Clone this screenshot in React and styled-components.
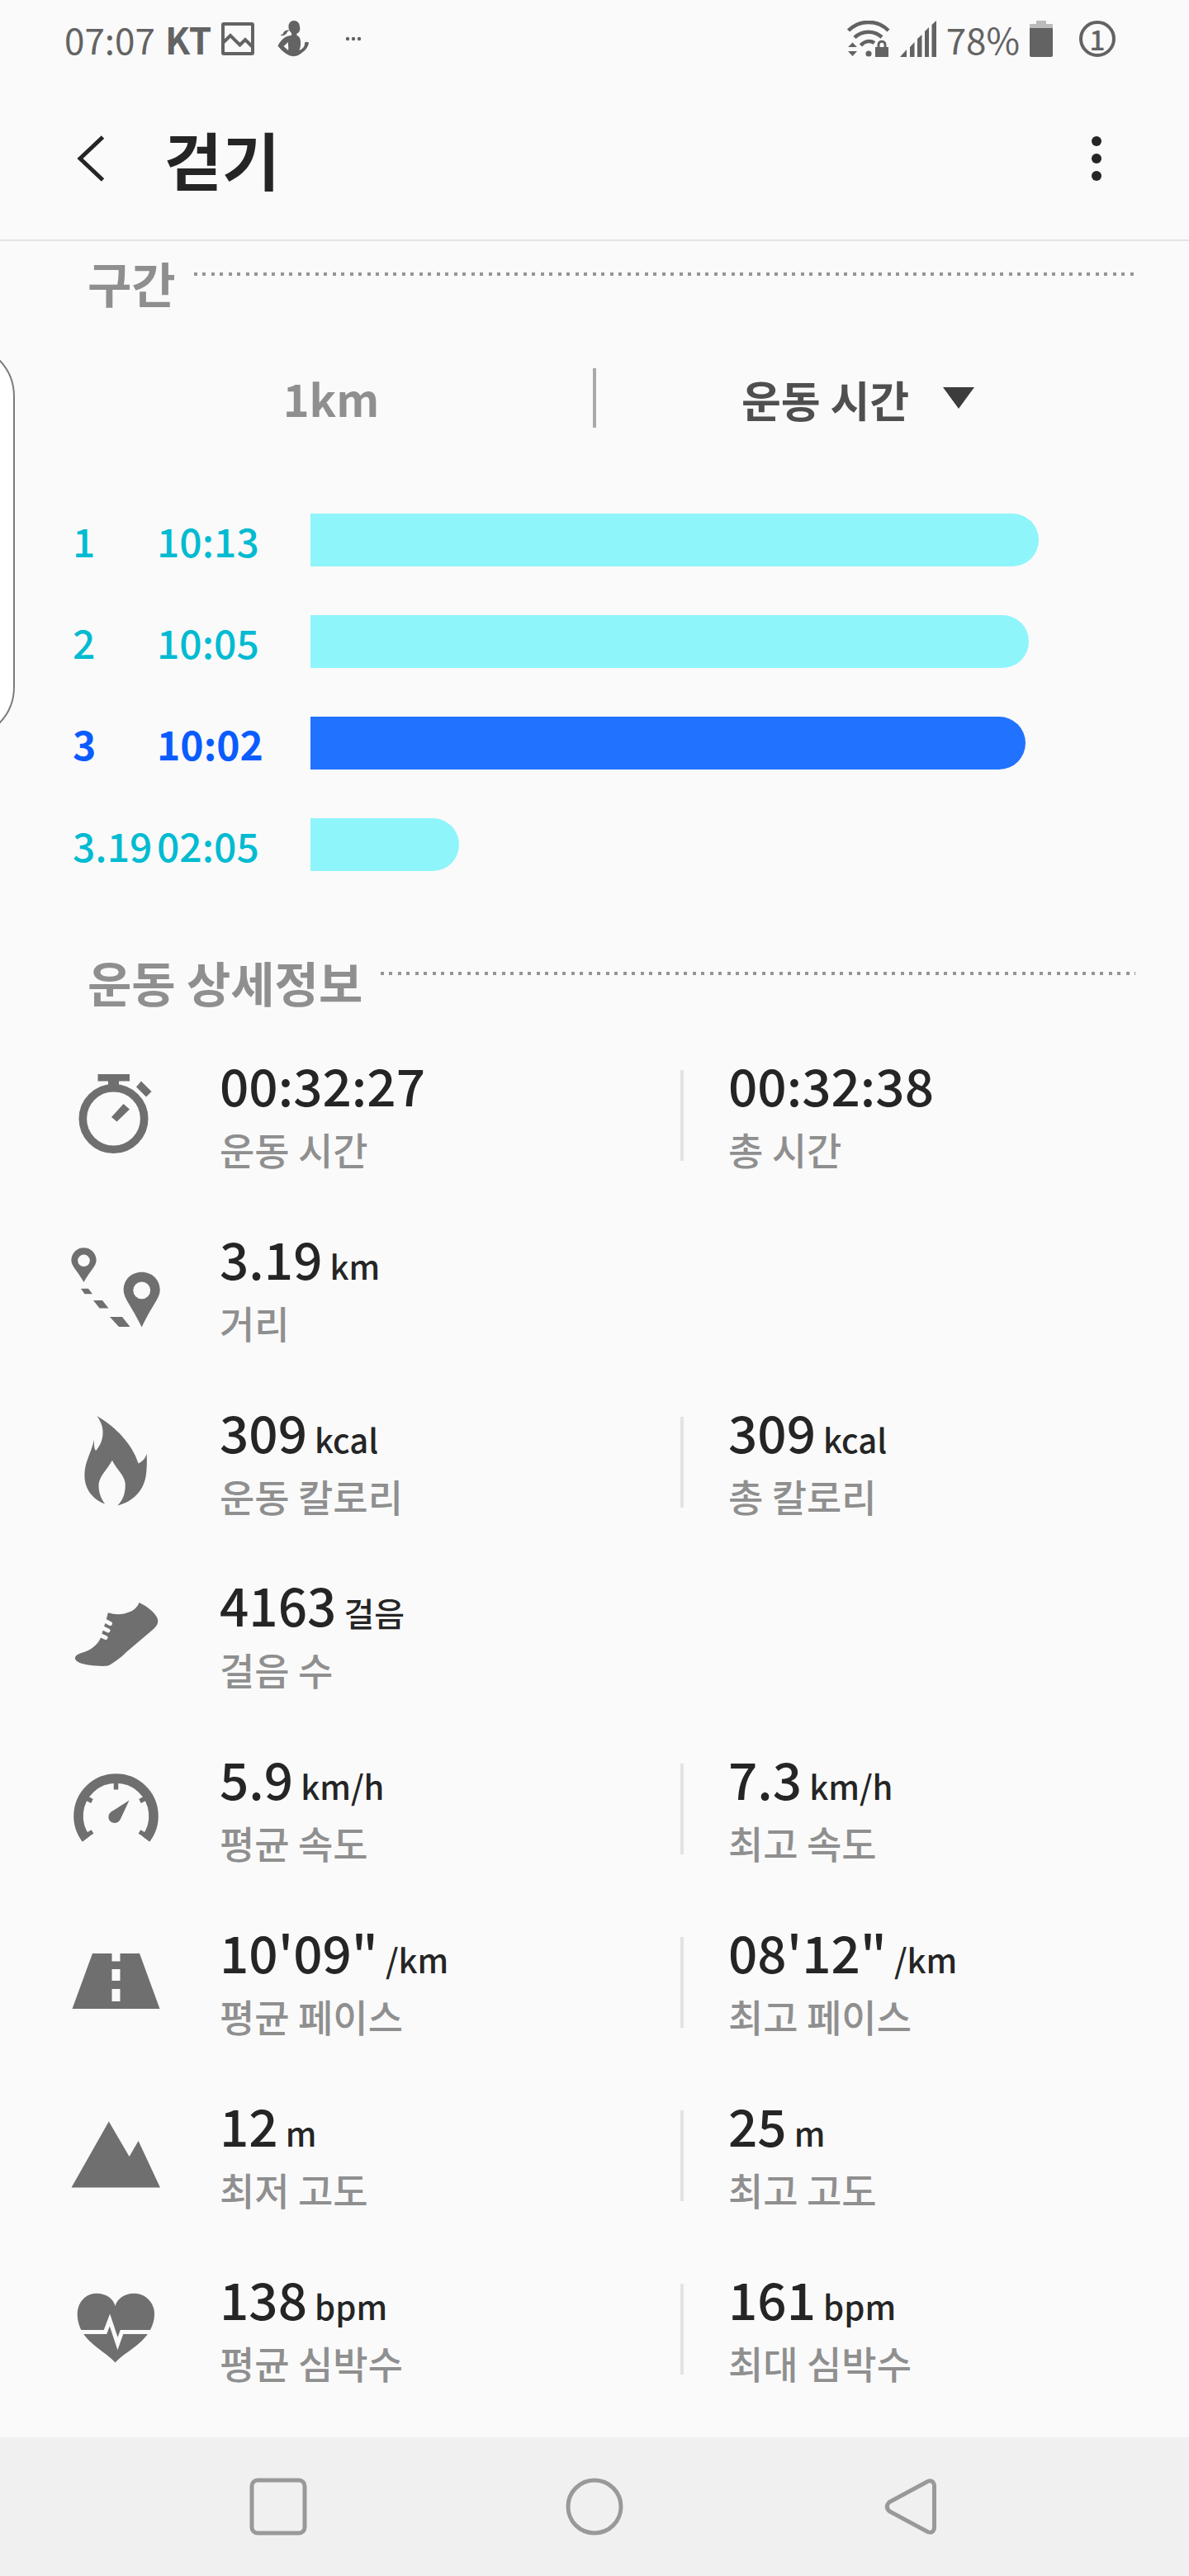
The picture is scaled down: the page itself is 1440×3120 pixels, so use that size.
import React from "react";
import styled, { createGlobalStyle } from "styled-components";

const GlobalStyle = createGlobalStyle`
  * {
    box-sizing: border-box;
  }

  body {
    margin: 0;
    background: #fafafa;
    color: #252525;
    font-family: "Noto Sans CJK KR", "Noto Sans", sans-serif;
  }

  button, select {
    margin: 0;
    padding: 0;
    border: 0;
    background: none;
    color: inherit;
    font: inherit;
    cursor: pointer;
  }

  svg {
    display: block;
    flex: none;
  }
`;

const Page = styled.div`
  position: relative;
  display: flex;
  flex-direction: column;
  min-height: 100vh;
  overflow: hidden;
`;

/* Status bar */

const StatusBar = styled.div`
  display: flex;
  justify-content: space-between;
  align-items: center;
  height: 94px;
  padding: 0 89px 0 78px;
  color: #636363;
  font-size: 44px;
  line-height: 44px;
`;

const StatusGroup = styled.div`
  display: flex;
  align-items: center;
  gap: ${(props) => props.$gap}px;
`;

const Carrier = styled.span`
  font-weight: 700;
`;

const CountBadge = styled.span`
  display: flex;
  align-items: center;
  justify-content: center;
  width: 44px;
  height: 44px;
  margin-left: 20px;
  border: 4px solid #636363;
  border-radius: 50%;
  font-size: 34px;
  font-weight: 500;
  line-height: 34px;
`;

/* App bar */

const AppBar = styled.header`
  display: flex;
  align-items: center;
  gap: 72px;
  height: 198px;
  padding: 0 106px 0 93px;
  border-bottom: 2px solid #e3e3e3;
`;

const Title = styled.h1`
  flex: 1;
  margin: 0;
  font-size: 76px;
  font-weight: 700;
  line-height: 96px;
`;

/* Handle of the edge panel, hangs over the left side */
const EdgeHandle = styled.div`
  position: absolute;
  top: 416px;
  left: -128px;
  width: 146px;
  height: 480px;
  border: 2px solid #7c7c7c;
  border-radius: 64px;
  background: #fff;
`;

/* Sections */

const Content = styled.main`
  padding: 18px 0 60px;
`;

const SectionHeader = styled.div`
  display: flex;
  align-items: flex-start;
  gap: 22px;
  padding: 0 65px 0 106px;
`;

const SectionTitle = styled.h2`
  margin: 0;
  color: #8f8f8f;
  font-size: 58px;
  font-weight: 700;
  line-height: 64px;
`;

const DottedLine = styled.div`
  flex: 1;
  height: 4px;
  margin-top: 20px;
  background: repeating-linear-gradient(
    to right,
    #959595 0 4px,
    transparent 4px 10px,
    #959595 10px 14px,
    transparent 14px 21px
  );
`;

const Filters = styled.div`
  display: grid;
  grid-template-columns: 1fr 4px 1fr;
  align-items: center;
  height: 72px;
  margin-top: 72px;
  padding: 0 84px;
`;

const Unit = styled.span`
  color: #8f8f8f;
  font-size: 54px;
  font-weight: 700;
  line-height: 72px;
  text-align: center;
`;

const FilterDivider = styled.div`
  height: 72px;
  background: #a9a9a9;
`;

const SelectBox = styled.label`
  display: flex;
  align-items: center;
  justify-content: center;
  gap: 40px;
`;

const Select = styled.select`
  appearance: none;
  height: 72px;
  color: #4f4f4f;
  font-size: 52px;
  font-weight: 700;
`;

/* Splits chart */

const SplitList = styled.ol`
  display: flex;
  flex-direction: column;
  gap: 59px;
  margin: 104px 0 102px;
  padding: 0 182px 0 88px;
  list-style: none;
`;

const Split = styled.li`
  display: grid;
  grid-template-columns: 102px 186px 1fr;
  align-items: center;
  height: 64px;
  color: ${(props) => (props.$best ? "#0a5cff" : "#00bbd1")};
  font-size: 48px;
  font-weight: ${(props) => (props.$best ? 700 : 500)};
  line-height: 64px;
`;

const Bar = styled.div`
  height: 64px;
  border-radius: 0 32px 32px 0;
  background: ${(props) => (props.$best ? "#2172ff" : "#8ef5fb")};
`;

/* Details */

const DetailList = styled.div`
  display: flex;
  flex-direction: column;
  gap: 70px;
  margin-top: 60px;
  padding: 0 58px 0 84px;
`;

const DetailRow = styled.div`
  display: grid;
  grid-template-columns: 182px 1fr 1fr;
  align-items: center;
`;

const DetailCell = styled.div`
  display: flex;
  align-items: center;
  gap: 54px;
`;

const CellDivider = styled.div`
  width: 4px;
  height: 110px;
  background: #e3e3e3;
`;

const Value = styled.div`
  height: 64px;
  font-size: 62px;
  font-weight: 500;
  line-height: 64px;
  white-space: pre;
`;

const ValueUnit = styled.span`
  font-size: 40px;
  line-height: 40px;
`;

const Label = styled.div`
  margin-top: 16px;
  color: #8f8f8f;
  font-size: 46px;
  font-weight: 500;
  line-height: 60px;
`;

/* Navigation bar */

const NavBar = styled.nav`
  display: grid;
  grid-template-columns: repeat(3, 1fr);
  height: 168px;
  margin-top: auto;
  padding: 0 145px;
  background: #f0f0f0;
`;

const NavButton = styled.button`
  display: flex;
  align-items: center;
  justify-content: center;
`;

const BG = "#fafafa";

const PictureIcon = () => (
  <svg width="40" height="40" viewBox="0 0 40 40" fill="none" stroke="currentColor" strokeWidth="4">
    <rect x="2" y="2" width="36" height="36" rx="1" />
    <path d="M3 24 11 16 22.500 27.500 29 21 38 30" />
  </svg>
);

const PersonIcon = () => (
  <svg width="40" height="44" viewBox="0 0 40 44" fill="currentColor">
    <path d="M20 0C25 0 27 4 27 7.500 28 10 27 15 23.500 15.500V18C27 19 28.500 23 28 29 28 32 27 34 26.500 36 31 34 33 31 33 28 32.500 26 35 25 38 26.500 37.500 33 32 38 25 42 22 43.500 17 43.500 14 42 8 39 3 34 .5 30.500 4 24 9 18 17 18V15C14.500 13 13 9 13.500 6 14 2 17 0 20 0Z" />
    <path d="M13 26 7.500 31 13 36C14 33 12.500 29 13 26Z" fill={BG} />
    <path d="M15 11.500C10 11 7 13 7 16L3.500 17.500C7 19.500 11 17 12 13.500Z" />
  </svg>
);

const MoreDots = () => (
  <svg width="20" height="6" viewBox="0 0 20 6" fill="currentColor">
    <circle cx="3" cy="3" r="2.200" />
    <circle cx="10" cy="3" r="2.200" />
    <circle cx="17" cy="3" r="2.200" />
  </svg>
);

const WifiIcon = () => (
  <svg width="52" height="44" viewBox="0 0 52 44" fill="none" stroke="currentColor" strokeWidth="4.500">
    <path d="M1.500 12C15-1.500 37-1.500 50 12" />
    <path d="M9 20.500C18 11.500 33 11.500 42 20" />
    <path d="M16.500 30C21 24.500 28 23.500 33 27" />
    <circle cx="26" cy="40" r="3.600" fill="currentColor" stroke="none" />
    <path d="M1 32 6.500 26.500 12 32ZM1 37 6.500 43 12 37ZM34 32H50V44H34Z" fill="currentColor" stroke="none" />
    <path d="M38 33V29C38 24 46 24 46 29V33" strokeWidth="3" />
  </svg>
);

const SignalIcon = () => (
  <svg width="44" height="44" viewBox="0 0 44 44" fill="currentColor">
    <path d="M0 44 8 35V44ZM12 44V32L17.500 26V44ZM21 44V22L26.500 17V44ZM30 44V13L35 8V44ZM38.500 44V5L44 0V44Z" />
  </svg>
);

const BatteryIcon = () => (
  <svg width="28" height="44" viewBox="0 0 28 44">
    <path d="M8 0H20V4H28V10H0V4H8Z" fill="#bbb" />
    <path d="M0 9H28V42Q28 44 26 44H2Q0 44 0 42Z" fill="currentColor" />
  </svg>
);

const ICONS = {
  time: (
    <>
      <circle cx="53.500" cy="60" r="37.200" fill="none" stroke="currentColor" strokeWidth="9.600" />
      <path d="M34.500 6H73V14.500H60V22H47V14.500H34.500ZM65.500 42 73 48.500 57.500 63.500 51 58ZM87 14.500 99.500 27 93 33.500 81 21.500Z" />
    </>
  ),
  distance: (
    <>
      <path
        fillRule="evenodd"
        d="M17.500 6.200C26 6.200 33 13 32.600 22 32 29 26 33 17.500 48 9 33 3 29 2.400 22 2 13 9 6.200 17.500 6.200ZM17.500 14.500A7.300 7.300 0 1 0 17.500 29.100 7.300 7.300 0 1 0 17.500 14.500Z"
      />
      <path
        fillRule="evenodd"
        d="M87.700 35.800C100 35.800 110 45 109.700 58 109.300 68 100 76 87.700 102.500 75 76 66 68 65.700 58 65.400 45 75 35.800 87.700 35.800ZM87.700 47.400A10.400 10.400 0 1 0 87.700 68.200 10.400 10.400 0 1 0 87.700 47.400Z"
      />
      <path d="M14 55.700H23L28 62.300H18.500ZM29 70H40L47.500 79.500H36.500ZM49 90H64L73.500 102H60Z" />
    </>
  ),
  calories: (
    <path d="M33.500 0C57 14 76 34 83.600 57.500 89 55 92 51 93.700 46 94 55 94 62 93 70 91 90 77 104 58.300 108.500 66 101 68 92 67.700 82 67 72 58 66 51.900 53.700 45 66 36 73 35.500 84 35.500 92 38 100 43.200 106.500 28 101 18 88 18.400 71 18.500 55 27 44 29.900 28.700 30 36 30 40 32.200 42 38 35 41 28 40.500 17.700 40 11 37 5 33.500 0Z" />
  ),
  steps: (
    <>
      <path d="M84.500 16C95 21 104 28 107 36 108 41 106 44 102 48L69 76C62 83 55 88 49 91.500 45 93.500 38 93 32 92.500 22 92 12 90 8 86 5 82 9 79 13 77.500 24 75 34 68 38 58.500L44.600 36.700 46.900 28.300C57 31 64 31 74.400 26.700 80 24 83 20 84.500 16Z" />
      <path
        d="M40 36.500 49.500 41.500M37 45 47 50M34 54 44 58.500"
        fill="none"
        stroke={BG}
        strokeWidth="5"
        strokeLinecap="round"
      />
    </>
  ),
  speed: (
    <>
      <path d="M20.400 92.200A45.500 45.500 0 1 1 92.600 92.200" fill="none" stroke="currentColor" strokeWidth="11.500" />
      <path
        d="M56.500 20V32.500M19 42 27.500 46.500M94 42 85.500 46.500M19 89 28 83.500M94 89 85 83.500"
        fill="none"
        stroke="currentColor"
        strokeWidth="5.500"
      />
      <path d="M72.500 45.500 62 68C59 75 49 74.500 47.500 67 47 62 50 59.500 53 58Z" />
    </>
  ),
  pace: (
    <path
      fillRule="evenodd"
      d="M28 21H51.500V30.500H61.500V21H85L109.500 88H3.500ZM51.500 40V54H61.500V40ZM51.500 64V79H61.500V64Z"
    />
  ),
  altitude: <path d="M47.800 14.500 72.600 57 83.600 38 110 94.500H2.500Z" />,
  heart: (
    <>
      <path d="M55.600 28C58 19 67 12.700 78 12.700 92 12.700 103 23 103 38 103 50 97 61 88 70 78 80 64 87 55.600 96.500 47 87 34 80 24 70 15 61 9.700 50 9.700 38 9.700 23 20 12.700 33 12.700 45 12.700 53 19 55.600 28Z" />
      <path d="M8 59.500H43.500L49 45 58.500 73.500 63.500 59.500H104" fill="none" stroke={BG} strokeWidth="5" />
    </>
  ),
};

const DetailIcon = ({ name }) => (
  <svg width="112" height="112" viewBox="0 0 112 112" fill="currentColor" color="#6f6f6f" aria-hidden="true">
    {ICONS[name]}
  </svg>
);

const splits = [
  { km: "1", time: "10:13", seconds: 613 },
  { km: "2", time: "10:05", seconds: 605 },
  { km: "3", time: "10:02", seconds: 602, best: true },
  { km: "3.19", time: "02:05", seconds: 125 },
];

const slowest = Math.max(...splits.map((s) => s.seconds));

const details = [
  { icon: "time", cells: [["00:32:27", "", "운동 시간"], ["00:32:38", "", "총 시간"]] },
  { icon: "distance", cells: [["3.19", "km", "거리"]] },
  { icon: "calories", cells: [["309", "kcal", "운동 칼로리"], ["309", "kcal", "총 칼로리"]] },
  { icon: "steps", cells: [["4163", "걸음", "걸음 수"]] },
  { icon: "speed", cells: [["5.9", "km/h", "평균 속도"], ["7.3", "km/h", "최고 속도"]] },
  { icon: "pace", cells: [["10'09\"", "/km", "평균 페이스"], ["08'12\"", "/km", "최고 페이스"]] },
  { icon: "altitude", cells: [["12", "m", "최저 고도"], ["25", "m", "최고 고도"]] },
  { icon: "heart", cells: [["138", "bpm", "평균 심박수"], ["161", "bpm", "최대 심박수"]] },
];

const Section = ({ title }) => (
  <SectionHeader>
    <SectionTitle>{title}</SectionTitle>
    <DottedLine />
  </SectionHeader>
);

const App = () => {
  return (
    <Page>
      <GlobalStyle />
      <StatusBar>
        <StatusGroup $gap={42}>
          <StatusGroup $gap={28}>
            <StatusGroup $gap={12}>
              <span>07:07</span>
              <Carrier>KT</Carrier>
              <PictureIcon />
            </StatusGroup>
            <PersonIcon />
          </StatusGroup>
          <MoreDots />
        </StatusGroup>
        <StatusGroup $gap={12}>
          <WifiIcon />
          <SignalIcon />
          <span>78%</span>
          <BatteryIcon />
          <CountBadge>1</CountBadge>
        </StatusGroup>
      </StatusBar>

      <AppBar>
        <button type="button" aria-label="Back">
          <svg width="34" height="56" viewBox="0 0 34 56" fill="none" stroke="currentColor" strokeWidth="5">
            <path d="M31.500 2 4 28 31.500 54" />
          </svg>
        </button>
        <Title>걷기</Title>
        <button type="button" aria-label="More">
          <svg width="12" height="56" viewBox="0 0 12 56" fill="currentColor">
            <circle cx="6" cy="7" r="6" />
            <circle cx="6" cy="28" r="6" />
            <circle cx="6" cy="49" r="6" />
          </svg>
        </button>
      </AppBar>

      <Content>
        <Section title="구간" />
        <Filters>
          <Unit>1km</Unit>
          <FilterDivider />
          <SelectBox>
            <Select aria-label="운동 시간">
              <option>운동 시간</option>
            </Select>
            <svg width="38" height="26" viewBox="0 0 38 26" fill="#3c3c3c">
              <path d="M0 0H38L19 26Z" />
            </svg>
          </SelectBox>
        </Filters>

        <SplitList>
          {splits.map((split) => (
            <Split key={split.km} $best={split.best}>
              <span>{split.km}</span>
              <span>{split.time}</span>
              <Bar $best={split.best} style={{ width: `${(split.seconds / slowest) * 100}%` }} />
            </Split>
          ))}
        </SplitList>

        <Section title="운동 상세정보" />
        <DetailList>
          {details.map((row) => (
            <DetailRow key={row.icon}>
              <DetailIcon name={row.icon} />
              {row.cells.map(([value, unit, label], i) => (
                <DetailCell key={label}>
                  {i > 0 && <CellDivider />}
                  <div>
                    <Value>
                      {value}
                      {unit && <ValueUnit> {unit}</ValueUnit>}
                    </Value>
                    <Label>{label}</Label>
                  </div>
                </DetailCell>
              ))}
            </DetailRow>
          ))}
        </DetailList>
      </Content>

      <NavBar>
        <NavButton type="button" aria-label="Recents">
          <svg width="70" height="70" viewBox="0 0 70 70" fill="none" stroke="#999" strokeWidth="5">
            <rect x="3" y="3" width="64" height="64" rx="7" />
          </svg>
        </NavButton>
        <NavButton type="button" aria-label="Home">
          <svg width="70" height="70" viewBox="0 0 70 70" fill="none" stroke="#999" strokeWidth="5">
            <circle cx="35" cy="35" r="32" />
          </svg>
        </NavButton>
        <NavButton type="button" aria-label="Back">
          <svg width="70" height="70" viewBox="0 0 70 70" fill="none" stroke="#999" strokeWidth="5">
            <path d="M55.500 4.500 9 29.500Q3.500 35 9 40.500L55.500 65.500Q62 68 63.500 61V9Q62 2 55.500 4.500Z" />
          </svg>
        </NavButton>
      </NavBar>

      <EdgeHandle />
    </Page>
  );
};

export default App;
